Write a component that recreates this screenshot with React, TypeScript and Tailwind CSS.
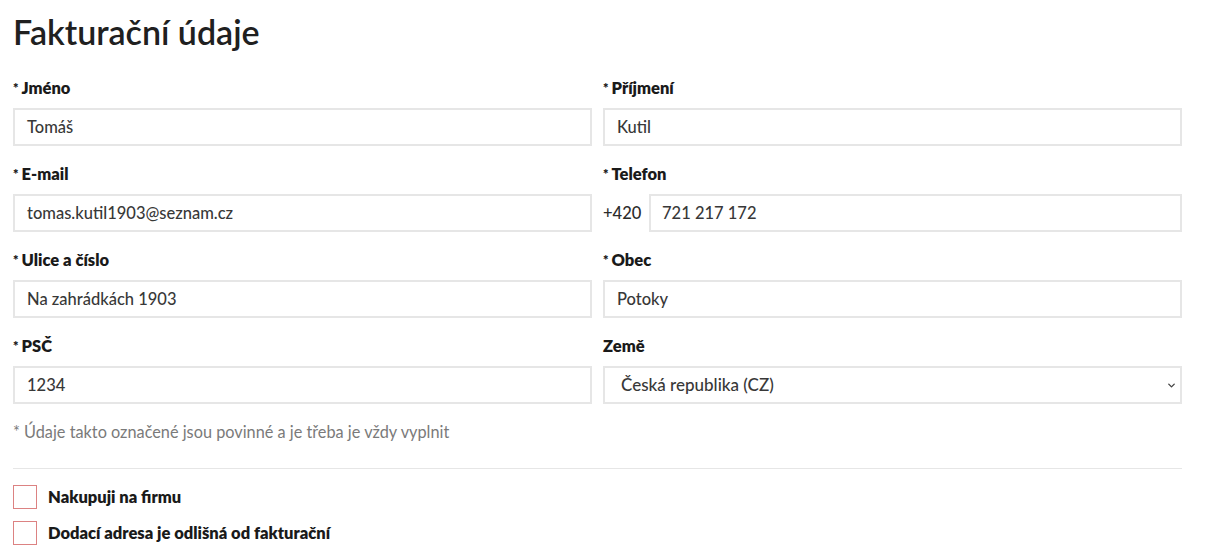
import { ChevronDown } from "lucide-react";

function Label({ text, required = true }: { text: string; required?: boolean }) {
  return (
    <label className="text-[16.5px] font-extrabold text-[#1a1a1a] h-[20px] leading-[20px] mb-[10px]">
      {required && <span className="text-[13px] align-top mr-[3px]">*</span>}
      {text}
    </label>
  );
}

function Field({ label, value }: { label: string; value: string }) {
  return (
    <div className="flex flex-col">
      <Label text={label} />
      <div className="h-[38px] border-2 border-[#e6e6e6] flex items-center px-[12px] text-[16.5px] font-medium text-[#383838]">
        {value}
      </div>
    </div>
  );
}

function PhoneField() {
  return (
    <div className="flex flex-col">
      <Label text="Telefon" />
      <div className="flex items-center gap-[8px]">
        <span className="text-[16.5px] font-medium text-[#2b2b2b] w-[38px]">+420</span>
        <div className="flex-1 h-[38px] border-2 border-[#e6e6e6] flex items-center px-[11px] text-[16.5px] font-medium text-[#383838]">
          721 217 172
        </div>
      </div>
    </div>
  );
}

function Check({ label }: { label: string }) {
  return (
    <div className="flex items-center gap-[11px]">
      <div className="w-[24px] h-[24px] border border-[#dc8282] bg-white" />
      <span className="text-[16.5px] font-extrabold text-[#1a1a1a]">{label}</span>
    </div>
  );
}

export default function App() {
  return (
    <div className="w-[1212px] h-[552px] bg-white px-[13px] pt-[12px] overflow-hidden" style={{ fontFamily: "Lato, 'Open Sans', sans-serif" }}>
      <div className="w-[1169px]">
        <h1 className="text-[34px] font-semibold text-[#202020] leading-[40px] mb-[26px]">Fakturační údaje</h1>
        <div className="grid grid-cols-2 gap-x-[11px] gap-y-[18px]">
          <Field label="Jméno" value="Tomáš" />
          <Field label="Příjmení" value="Kutil" />
          <Field label="E-mail" value="tomas.kutil1903@seznam.cz" />
          <PhoneField />
          <Field label="Ulice a číslo" value="Na zahrádkách 1903" />
          <Field label="Obec" value="Potoky" />
          <Field label="PSČ" value="1234" />
          <div className="flex flex-col">
            <Label text="Země" required={false} />
            <div className="h-[38px] border-2 border-[#e6e6e6] flex items-center justify-between pl-[16px] pr-[3px] text-[17px] font-medium text-[#383838]">
              Česká republika (CZ)
              <ChevronDown size={11} strokeWidth={3} className="text-[#444]" />
            </div>
          </div>
        </div>
        <p className="text-[16.3px] text-[#7a7a7a] leading-[20px] mt-[18px]">* Údaje takto označené jsou povinné a je třeba je vždy vyplnit</p>
        <div className="border-t border-[#e6e6e6] mt-[26px] mb-[16px]" />
        <div className="flex flex-col gap-[11px]">
          <Check label="Nakupuji na firmu" />
          <Check label="Dodací adresa je odlišná od fakturační" />
        </div>
      </div>
    </div>
  );
}
